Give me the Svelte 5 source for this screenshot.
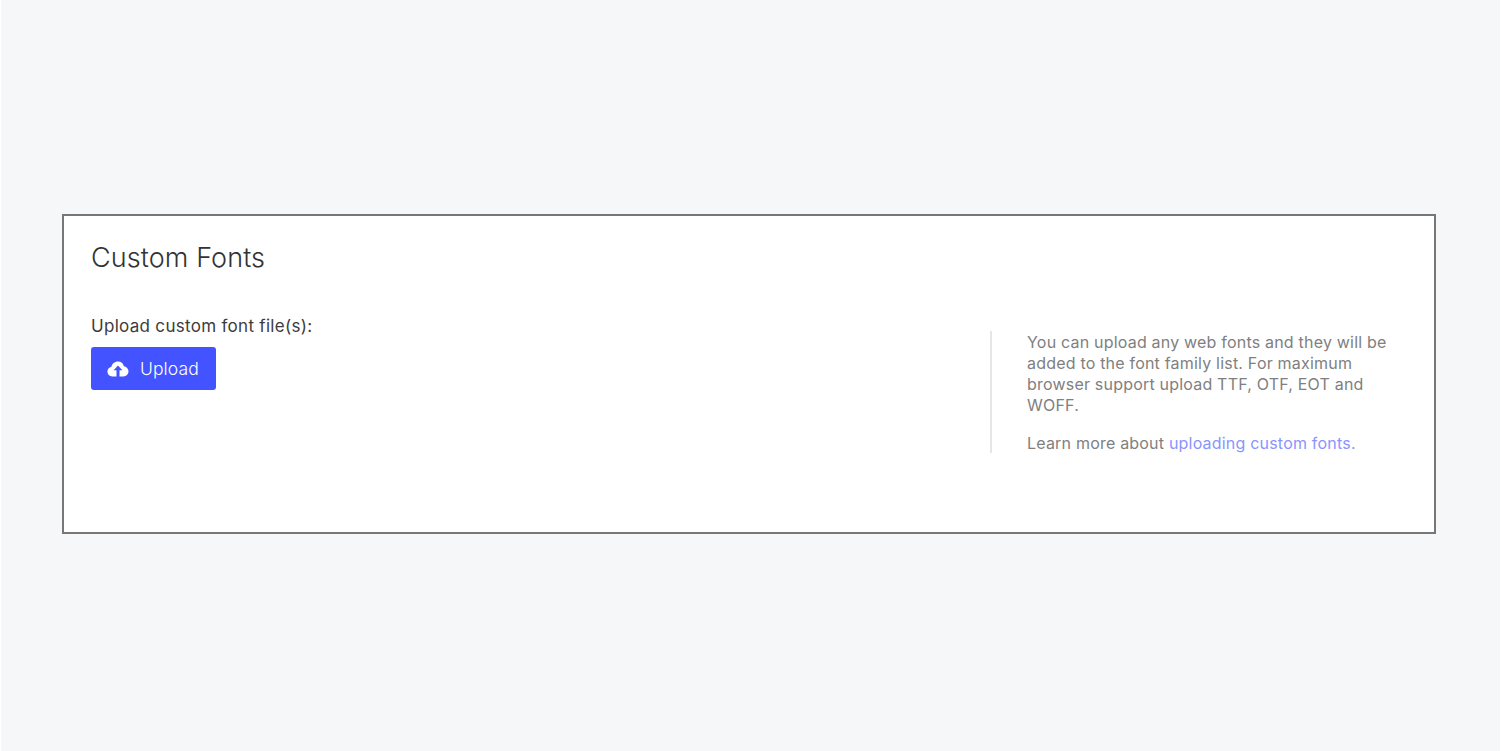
<script>
  const title = "Custom Fonts";
</script>

<main class="page">
  <section class="card">
    <h1>{title}</h1>
    <div class="columns">
      <div class="upload">
        <div class="label">Upload custom font file(s):</div>
        <button class="btn" type="button">
          <svg width="22" height="16" viewBox="0 0 22 16" aria-hidden="true">
            <path fill="#fff" fill-rule="evenodd" d="M11 0.4c2.9 0 5.3 2 5.9 4.8 2.5 0.3 4.6 2.4 4.6 5 0 2.8-2.3 5.2-5.1 5.2H5.2C2.5 15.4 0.4 13.2 0.4 10.6c0-2.4 1.7-4.4 4-4.9C5 2.7 7.7 0.4 11 0.4z M11 4.6 6.6 9.2h2.9v6.2h3V9.2h2.9z"/>
          </svg>
          <span>Upload</span>
        </button>
      </div>
      <aside class="help">
        <p>You can upload any web fonts and they will be added to the font family list. For maximum browser support upload TTF, OTF, EOT and WOFF.</p>
        <p>Learn more about <a href="#top">uploading custom fonts.</a></p>
      </aside>
    </div>
  </section>
</main>

<style>
  :global(body) { margin: 0; background: #f6f7f9; }
  .page { height: 751px; box-sizing: border-box; padding: 214px 64px 0 61px; font-family: Inter, "Liberation Sans", sans-serif; border-left: 1px solid #fff; border-right: 1px solid #fff; }
  .card { height: 320px; box-sizing: border-box; background: #fff; border: 2px solid #777; padding: 25px 27px 0; color: #333; }
  h1 { margin: 0; font-size: 27px; line-height: 34px; font-weight: 350; letter-spacing: 0.1px; color: #333; }
  .columns { display: flex; justify-content: space-between; margin-top: 39px; }
  .label { font-size: 17px; line-height: 24px; letter-spacing: 0.3px; color: #3c3c3c; }
  .btn { display: flex; align-items: center; gap: 11px; height: 43px; width: 125px; margin-top: 9px; padding: 0 0 0 16px; border: 0; border-radius: 3px; background: #4353ff; color: #fff; font: inherit; font-size: 17.5px; font-weight: 300; letter-spacing: 0.1px; }
  .help { width: 380px; margin: 17px 0 0 0; padding: 1px 0 0 35px; border-left: 2px solid #e6e6e6; font-size: 16px; line-height: 21px; letter-spacing: 0.2px; color: #808080; box-sizing: content-box; }
  .help p { margin: 0 0 17px; }
  .help p:last-child { margin-bottom: -1px; }
  .help a { color: #8a94ff; text-decoration: none; }
</style>
